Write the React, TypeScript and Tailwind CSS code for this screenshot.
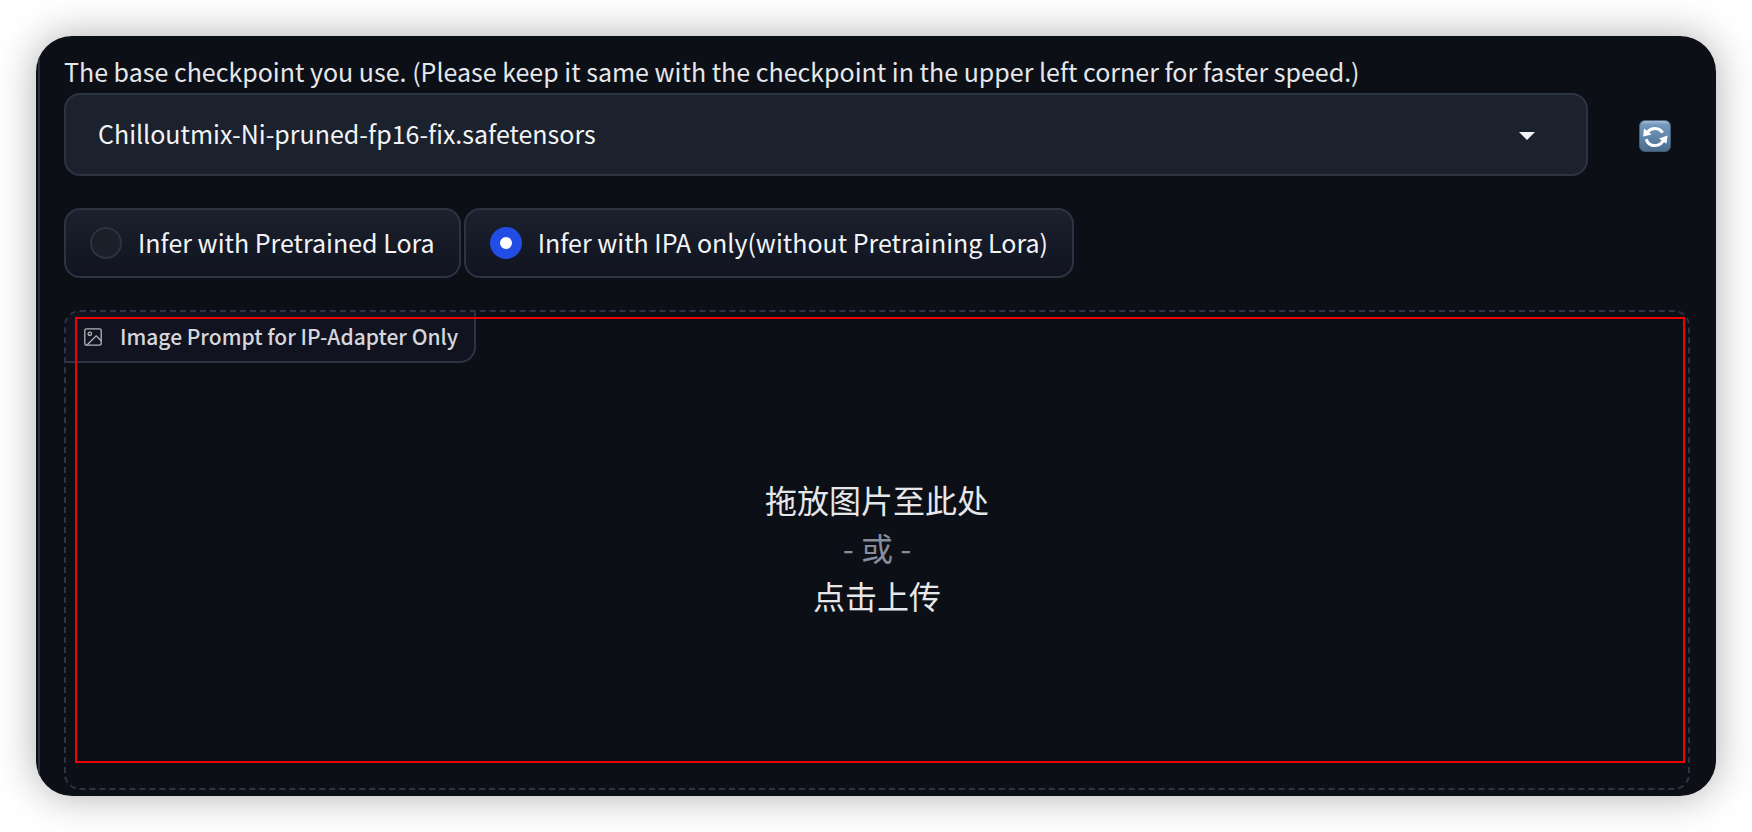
import { useRef, useState } from "react";

const checkpoints = ["Chilloutmix-Ni-pruned-fp16-fix.safetensors"];

const modes = [
  { value: "lora", label: "Infer with Pretrained Lora" },
  { value: "ipa", label: "Infer with IPA only(without Pretraining Lora)" },
];

function RefreshIcon() {
  return (
    <svg viewBox="0 0 32 32" className="size-8" aria-hidden="true">
      <defs>
        <linearGradient id="tile" x1="0" y1="0" x2="0" y2="1">
          <stop offset="0" stopColor="#a9c3da" />
          <stop offset="0.14" stopColor="#7398bb" />
          <stop offset="0.55" stopColor="#5f86aa" />
          <stop offset="1" stopColor="#4c6c89" />
        </linearGradient>
      </defs>
      <rect x="0.5" y="0.5" width="31" height="31" rx="5.5" fill="url(#tile)" stroke="#46627c" strokeWidth="0.8" />
      <g fill="none" stroke="#ffffff" strokeWidth="3">
        <path d="M8.6 12.2A9.2 9.2 0 0 1 23.6 12.8" />
        <path d="M7.2 19.2A9.2 9.2 0 0 0 24.6 19.6" />
      </g>
      <path d="M5 8.6L4.2 16.4L12.6 14.4Z" fill="#ffffff" />
      <path d="M28.6 15.6L20 18.4L27.4 23.8Z" fill="#ffffff" />
    </svg>
  );
}

function ImageIcon() {
  return (
    <svg
      viewBox="0 0 18 18"
      className="size-[18px] shrink-0"
      fill="none"
      stroke="#b4b6bd"
      strokeWidth="1.3"
      aria-hidden="true"
    >
      <rect x="0.8" y="0.8" width="16.4" height="16.4" rx="1.6" />
      <circle cx="5.8" cy="5.8" r="1.7" />
      <path d="M3 17L12.2 7.8L17.2 12.8" />
    </svg>
  );
}

export default function App() {
  const [mode, setMode] = useState("ipa");
  const fileInput = useRef<HTMLInputElement>(null);

  return (
    <main className="bg-white p-9 font-['Noto_Sans_CJK_SC',sans-serif] text-[25px] text-[#f3f4f6]">
      <div className="overflow-hidden rounded-[36px] bg-[#0c0f15] pl-0.5 shadow-[0_0_40px_rgba(0,0,0,0.32)]">
        <div className="flex flex-col gap-8 border-l-2 border-[#283040] pt-[17px] pr-[26px] pb-1.5 pl-6">
          <div>
            <label htmlFor="checkpoint" className="block pb-1 leading-9 text-[#e5e7eb]">
              The base checkpoint you use. (Please keep it same with the checkpoint in the upper left corner for faster
              speed.)
            </label>
            <div className="flex items-center gap-8">
              <div className="grid flex-1 items-center">
                <select
                  id="checkpoint"
                  className="col-start-1 row-start-1 h-[83px] w-full appearance-none rounded-2xl border-2 border-[#2c3444] bg-[#1b212d] px-8 pb-0.5"
                >
                  {checkpoints.map((name) => (
                    <option key={name}>{name}</option>
                  ))}
                </select>
                <svg
                  viewBox="0 0 16 8"
                  className="pointer-events-none col-start-1 row-start-1 mt-0.5 mr-[53px] h-2 w-4 justify-self-end"
                  aria-hidden="true"
                >
                  <path d="M0 0H16L8 8Z" fill="#f3f4f6" />
                </svg>
              </div>
              <button type="button" aria-label="Refresh checkpoints" className="flex w-[70px] justify-center pt-0.5">
                <RefreshIcon />
              </button>
            </div>
          </div>

          <fieldset className="flex gap-[3px]">
            {modes.map(({ value, label }) => (
              <label
                key={value}
                className="flex h-[70px] items-center gap-4 rounded-2xl border-2 border-[#2c3444] bg-linear-to-b from-[#1b212d] to-[#111320] px-6"
              >
                <input
                  type="radio"
                  name="mode"
                  value={value}
                  checked={mode === value}
                  onChange={() => setMode(value)}
                  className="size-8 appearance-none rounded-full border-2 border-[#2c3444] bg-[#1a1f2a] checked:border-[10px] checked:border-[#224de4] checked:bg-white"
                />
                {label}
              </label>
            ))}
          </fieldset>

          <div className="relative flex h-[480px] flex-col rounded-2xl border-2 border-dashed border-[#2c3444]">
            <div className="absolute top-0 left-0 flex h-[51px] items-center gap-[18px] rounded-tl-[14px] rounded-br-2xl border-r-2 border-b-2 border-[#2c3444] bg-[#111320] pr-4 pl-[18px] text-[21px] font-medium text-[#d5d7dc]">
              <ImageIcon />
              Image Prompt for IP-Adapter Only
            </div>
            <button
              type="button"
              onClick={() => fileInput.current?.click()}
              className="flex flex-1 flex-col items-center justify-center pb-1.5 text-[32px] leading-[48px] text-[#e5e7eb]"
            >
              <span>拖放图片至此处</span>
              <span className="text-[#858d9c]">- 或 -</span>
              <span>点击上传</span>
            </button>
            <input ref={fileInput} type="file" accept="image/*" aria-label="Image Prompt" className="hidden" />
            <div className="pointer-events-none absolute top-[5px] right-[3px] bottom-[25px] left-[9px] border-2 border-[#f00000]" />
          </div>
        </div>
      </div>
    </main>
  );
}
